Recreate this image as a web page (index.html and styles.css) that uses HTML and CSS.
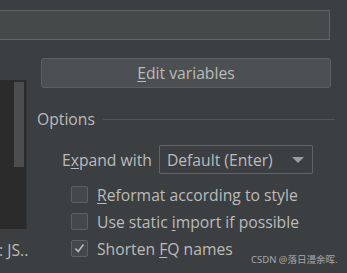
FILE: index.html
```html
<!DOCTYPE html>
<html lang="en">
<head>
    <meta charset="UTF-8">
    <title>Live Template Options</title>
    <link rel="stylesheet" href="styles.css">
</head>
<body>
    <div class="field"></div>

    <div class="main">
        <div class="left">
            <div class="list">
                <div class="thumb"></div>
            </div>
            <div class="context">: JS..</div>
        </div>

        <div class="right">
            <button class="edit-btn"><u>E</u>dit variables</button>

            <div class="group-title">
                <span>Options</span>
                <div class="rule"></div>
            </div>

            <div class="expand-row">
                <span class="label">E<u>x</u>pand with</span>
                <div class="combo">
                    <span>Default (Enter)</span>
                    <span class="arrow"></span>
                </div>
            </div>

            <div class="checks">
                <div class="check">
                    <span class="box"></span>
                    <span><u>R</u>eformat according to style</span>
                </div>
                <div class="check">
                    <span class="box"></span>
                    <span>Use static <u>i</u>mport if possible</span>
                </div>
                <div class="check">
                    <span class="box">
                        <svg width="13" height="13" viewBox="0 0 13 13">
                            <path d="M2.5 6.5 L5.2 9.5 L10.5 2.5" fill="none" stroke="#bbbbbb" stroke-width="1.6"/>
                        </svg>
                    </span>
                    <span>Shorten <u>F</u>Q names</span>
                </div>
            </div>
        </div>
    </div>

    <div class="watermark">CSDN @落日漫余晖.</div>
</body>
</html>
```

FILE: styles.css
```css
* {
    margin: 0;
    padding: 0;
    box-sizing: border-box;
}

body {
    width: 347px;
    height: 273px;
    overflow: hidden;
    background: #3c3f41;
    color: #bbbbbb;
    font-family: "Open Sans", "Noto Sans", "Noto Sans CJK SC", sans-serif;
    font-size: 15.7px;
    position: relative;
}

u {
    text-decoration-thickness: 1px;
    text-underline-offset: 2px;
}

.field {
    margin-top: 10px;
    margin-left: -2px;
    width: 332px;
    height: 30px;
    background: #45494a;
    border: 1px solid #646464;
}

.main {
    display: flex;
    margin-top: 18px;
}

.left {
    width: 27px;
    padding-top: 22px;
}

.list {
    height: 149px;
    background: #2b2b2b;
    border-right: 1px solid #333537;
    display: flex;
    justify-content: flex-end;
    padding: 2px 2px 0 0;
}

.thumb {
    width: 10px;
    height: 85px;
    background: #4b4d4f;
}

.context {
    margin-top: 10px;
    margin-left: -1px;
    white-space: nowrap;
}

.right {
    margin-left: 10px;
    width: 298px;
}

.edit-btn {
    display: block;
    margin-left: 4px;
    width: 290px;
    height: 30px;
    background: #4c5052;
    border: 1px solid #5e6060;
    border-radius: 3px;
    color: #bbbbbb;
    font: inherit;
}

.group-title {
    display: flex;
    align-items: center;
    margin-top: 20px;
    gap: 8px;
}

.rule {
    flex: 1;
    height: 1px;
    background: #515658;
}

.expand-row {
    display: flex;
    align-items: center;
    margin-top: 15px;
    margin-left: 25px;
    gap: 7px;
}

.combo {
    width: 154px;
    height: 29px;
    border: 1px solid #646464;
    border-radius: 2px;
    display: flex;
    align-items: center;
    justify-content: space-between;
    padding: 0 8px 0 7px;
}

.arrow {
    width: 0;
    height: 0;
    border-left: 6px solid transparent;
    border-right: 6px solid transparent;
    border-top: 6px solid #9a9da0;
}

.checks {
    margin-top: 7px;
    margin-left: 34px;
}

.check {
    display: flex;
    align-items: center;
    height: 27px;
    gap: 9px;
}

.box {
    width: 17px;
    height: 17px;
    border: 1px solid #5e6163;
    border-radius: 2px;
    background: #43494a;
    display: flex;
    align-items: center;
    justify-content: center;
}

.watermark {
    position: absolute;
    left: 251px;
    top: 252px;
    font-size: 9.5px;
    color: #a6a8aa;
    white-space: nowrap;
    font-family: "Noto Sans", "Noto Sans CJK SC", sans-serif;
}
```
